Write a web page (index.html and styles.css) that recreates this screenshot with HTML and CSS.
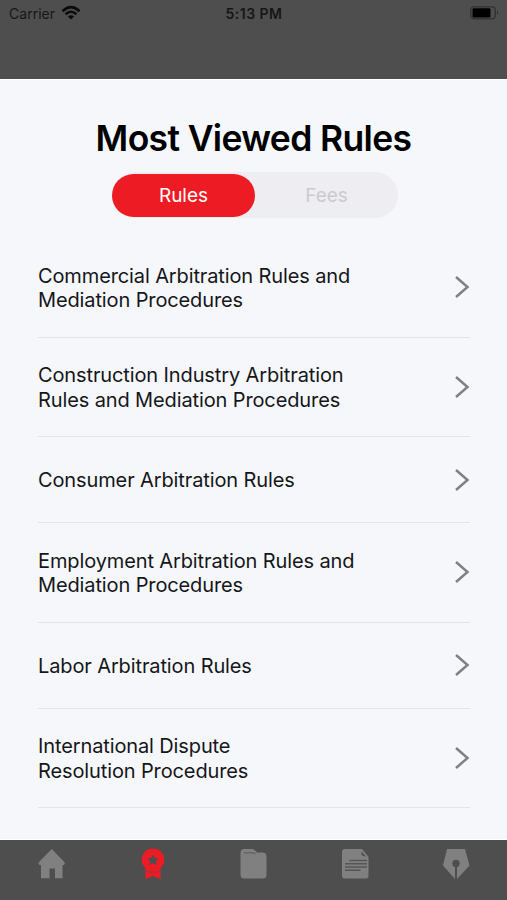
FILE: index.html
```html
<!DOCTYPE html>
<html lang="en">
<head>
<meta charset="utf-8">
<title>Most Viewed Rules</title>
<link rel="stylesheet" href="styles.css">
</head>
<body>
<header class="status">
  <div class="carrier"><span class="carrier-name">Carrier</span>
    <svg class="wifi" width="20" height="16" viewBox="0 0 20 16" fill="none" stroke="#0b0b0b" stroke-width="2.6"><path d="M1.500 6.200Q10-1.800 18.500 6.200M4.600 9.300Q10 4.200 15.400 9.300"/><path d="M10 14.500 6.900 11.400Q10 8.900 13.100 11.400Z" fill="#0b0b0b" stroke="none"/></svg>
  </div>
  <div class="time">5:13 PM</div>
  <svg class="battery" width="30" height="14" viewBox="0 0 30 14"><rect x=".8" y=".8" width="24.400" height="12" rx="3" fill="none" stroke="#303030" stroke-width="1.200"/><rect x="2.500" y="2.200" width="18" height="9.200" rx="1.200" fill="#000"/><path d="M27 4.500q2.500 2.200 0 4.500z" fill="#303030"/></svg>
</header>
<main class="sheet">
  <h1 class="title">Most Viewed Rules</h1>
  <div class="segments"><button class="segment active">Rules</button><button class="segment">Fees</button></div>
  <ul class="rules">
    <li class="rule"><span class="label">Commercial Arbitration Rules and<br>Mediation Procedures</span><svg class="chevron" viewBox="0 0 16 24"><path d="M2 2 13.500 12 2 22"/></svg></li>
    <li class="rule"><span class="label">Construction Industry Arbitration<br>Rules and Mediation Procedures</span><svg class="chevron" viewBox="0 0 16 24"><path d="M2 2 13.500 12 2 22"/></svg></li>
    <li class="rule single"><span class="label">Consumer Arbitration Rules</span><svg class="chevron" viewBox="0 0 16 24"><path d="M2 2 13.500 12 2 22"/></svg></li>
    <li class="rule"><span class="label">Employment Arbitration Rules and<br>Mediation Procedures</span><svg class="chevron" viewBox="0 0 16 24"><path d="M2 2 13.500 12 2 22"/></svg></li>
    <li class="rule single"><span class="label">Labor Arbitration Rules</span><svg class="chevron" viewBox="0 0 16 24"><path d="M2 2 13.500 12 2 22"/></svg></li>
    <li class="rule"><span class="label">International Dispute<br>Resolution Procedures</span><svg class="chevron" viewBox="0 0 16 24"><path d="M2 2 13.500 12 2 22"/></svg></li>
  </ul>
</main>
<nav class="tabs">
  <svg class="tab" viewBox="0 0 30 32"><path d="M15.800 1 28.300 14q1.200 1.500-.3 3h-1.500v13.300H19V20.500h-5.500v9.800H5V17H3.500q-1.800-1-.5-3Z"/></svg>
  <svg class="tab selected" viewBox="0 0 30 32"><path d="M8.500 20h15V30.800L16 28.500l-7.500 2.300z"/><circle cx="16" cy="11.800" r="11.300"/><path class="cut" d="m16 6.300 1.700 3.700 4.100.5-3 2.800.8 4-3.600-2-3.600 2 .8-4-3-2.800 4.100-.5z"/><path class="cut" d="M8.500 22.300q7.500 3 15 0v.9q-7.500 3-15 0zM16 27l2.800 2.800h-5.600z" opacity=".55"/></svg>
  <svg class="tab" viewBox="0 0 30 32"><path d="M2.500 5Q2.500 1 6 1h8q2 0 3 1.500L19 4.500h5.500q4 0 4 4v18.500q0 3.500-4 3.500H6q-3.500 0-3.500-4Z"/><path class="line" d="M6 4.800h9l2.500 1" opacity=".6"/></svg>
  <svg class="tab" viewBox="0 0 30 32"><path d="M5 1h17l6.500 8v18.500q0 3-3 3H5q-3 0-3-3V4q0-3 3-3Z"/><path class="cut" d="M21.500 3.500 26 8.500q-5.500 0-4.500-5Z"/><path class="line" d="M9.500 12.500H27M5 15.800h22M5 19h22M5 22.300h15.500"/></svg>
  <svg class="tab" viewBox="0 0 30 32"><path d="M6 1h18l4.500 16.500L16.500 30.500h-3L2 17.500Z"/><circle class="cut" cx="15" cy="15.500" r="3.700"/><path class="slot" d="M15 16v15"/></svg>
</nav>
</body>
</html>
```
FILE: styles.css
```css
* { box-sizing: border-box; }
body {
  margin: 0;
  height: 900px;
  display: flex;
  flex-direction: column;
  overflow: hidden;
  background: #4e4e4e;
  font-family: Inter, "Liberation Sans", sans-serif;
}
.status {
  height: 79px;
  display: grid;
  grid-template-columns: 1fr auto 1fr;
  align-items: start;
  padding: 5px 8px 0 9px;
  font-size: 14px;
  line-height: 18px;
  color: #161616;
}
.carrier { display: flex; gap: 6px; }
.carrier-name { letter-spacing: .03px; }
.time { font-weight: 600; letter-spacing: .5px; }
.battery { justify-self: end; margin: 1px -1px 0 0; }
.sheet {
  height: 761px;
  background: #f5f7fb;
  border-top: 1px solid #fff;
  border-bottom: 1px solid #fff;
  display: flex;
  flex-direction: column;
}
.title {
  margin: 37px 0 0;
  height: 44px;
  text-align: center;
  font-size: 35.5px;
  line-height: 44px;
  font-weight: 600;
  letter-spacing: -.65px;
  color: #000;
}
.segments {
  align-self: center;
  width: 286px;
  height: 46px;
  margin: 11px 0 0 3px;
  padding: 1.5px 0;
  display: flex;
  align-items: center;
  border-radius: 23px;
  background: #eeedf1;
}
.segment {
  width: 143.5px;
  height: 43px;
  border: 0;
  padding: 1px 0 0;
  border-radius: 22px;
  background: transparent;
  font: 19px/42px Inter, sans-serif;
  color: #cbcbcf;
}
.segment.active { background: #ed1c24; color: #fff; }
.rules {
  list-style: none;
  margin: 20px 37px 0 38px;
  padding: 0;
}
.rule {
  height: 99.5px;
  display: flex;
  align-items: center;
  justify-content: space-between;
  border-bottom: 1px solid #e3e4e8;
}
.rule.single { height: 86px; }
.label {
  padding-top: 2px;
  font-size: 20px;
  line-height: 24.5px;
  letter-spacing: -.12px;
  color: #151619;
  white-space: nowrap;
}
.chevron { width: 16px; height: 24px; flex: none; fill: none; stroke: #808184; stroke-width: 2.5; }
.tabs {
  height: 60px;
  display: flex;
  justify-content: space-around;
  padding-top: 8px;
}
.tab { width: 30px; height: 32px; fill: #808080; }
.tab.selected { fill: #ed1c24; }
.tab .cut { fill: #4e4e4e; }
.tab .line { fill: none; stroke: #555; stroke-width: 1.4; }
.tab .slot { fill: none; stroke: #4e4e4e; stroke-width: 2; }
```
